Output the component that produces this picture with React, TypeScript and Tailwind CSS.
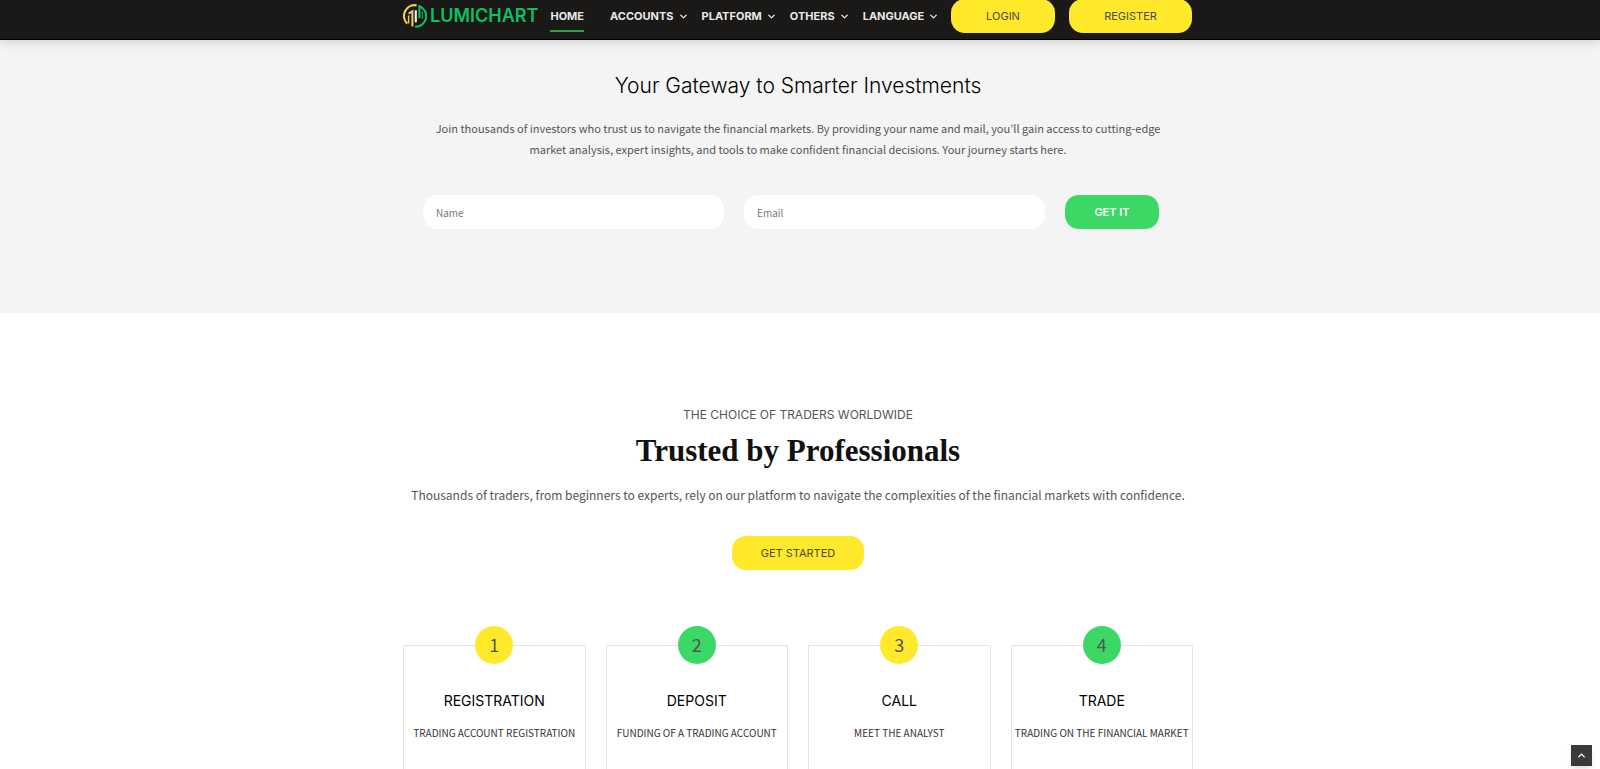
import { ChevronDown, ChevronUp } from 'lucide-react';

interface Step {
  title: string;
  text: string;
  color: string;
}

const menu = ['ACCOUNTS', 'PLATFORM', 'OTHERS', 'LANGUAGE'];

const steps: Step[] = [
  { title: 'REGISTRATION', text: 'TRADING ACCOUNT REGISTRATION', color: 'bg-[#ffe92a]' },
  { title: 'DEPOSIT', text: 'FUNDING OF A TRADING ACCOUNT', color: 'bg-[#3bd865]' },
  { title: 'CALL', text: 'MEET THE ANALYST', color: 'bg-[#ffe92a]' },
  { title: 'TRADE', text: 'TRADING ON THE FINANCIAL MARKET', color: 'bg-[#3bd865]' },
];

function LogoMark() {
  return (
    <svg viewBox="0 0 24 24" className="h-6 w-6" fill="none" aria-hidden="true">
      <path d="M13.6 1.3A10.8 10.8 0 0 0 4.2 19.6" stroke="#f3cf4e" strokeWidth="2.2" />
      <path d="M5.6 11.5V19.5" stroke="#f3cf4e" strokeWidth="1.4" />
      <path d="M5.6 9.6L9.4 7.2V22.6" stroke="#f3cf4e" strokeWidth="2" />
      <path d="M12.8 6.3V18.3" stroke="#f4f4f4" strokeWidth="2.1" />
      <path d="M16.4 14.2V2.2A10.6 10.6 0 0 1 12 22.7" stroke="#0fbf62" strokeWidth="2.1" />
      <path d="M19.3 7.5V14.5" stroke="#0fbf62" strokeWidth="1.1" />
    </svg>
  );
}

function Header() {
  return (
    <header className="sticky top-0 z-10 h-10 border-b border-black bg-[#1a1917] pr-1 shadow-[0_0_12px_rgba(0,0,0,0.2)]">
      <div className="mx-auto flex h-8 max-w-[790px] items-center pr-px">
        <a href="#home" className="flex items-center gap-[3px] text-[18px] leading-6 font-semibold text-[#0fbf62]">
          <LogoMark />
          LUMICHART
        </a>
        <nav className="ml-3 flex items-center text-[11px] leading-4 font-bold text-[#e9e9e9]">
          <a href="#home" className="mr-[26px] flex h-8 items-center border-b-2 border-[#2f9e44] pt-0.5">
            HOME
          </a>
          <div className="flex items-center gap-[13px]">
            {menu.map((item) => (
              <button key={item} type="button" className="flex items-center gap-1">
                {item}
                <ChevronDown size={11} strokeWidth={3} />
              </button>
            ))}
          </div>
        </nav>
        <div className="ml-auto flex gap-[14px] text-[11px] leading-4 text-[#4c4c3c]">
          <button type="button" className="h-[34px] w-[104px] rounded-[14px] bg-[#ffe92a]">
            LOGIN
          </button>
          <button type="button" className="h-[34px] w-[123px] rounded-[14px] bg-[#ffe92a]">
            REGISTER
          </button>
        </div>
      </div>
    </header>
  );
}

function SignUp() {
  return (
    <section className="bg-[#f4f4f4] pt-8 pr-1 pb-[84px]">
      <div className="mx-auto max-w-[750px] text-center">
        <h2 className="text-[21px] leading-7 font-light text-black">Your Gateway to Smarter Investments</h2>
        <p className="mt-[18px] px-3 font-['Noto_Sans_CJK_KR',sans-serif] text-[11px] leading-[21px] text-[#555]">
          Join thousands of investors who trust us to navigate the financial markets. By providing your name and mail,
          you’ll gain access to cutting-edge market analysis, expert insights, and tools to make confident financial
          decisions. Your journey starts here.
        </p>
        <form
          className="mt-[35px] flex gap-5 pr-[14px] font-['Noto_Sans_CJK_KR',sans-serif] text-[10px]"
          onSubmit={(e) => e.preventDefault()}
        >
          <input
            type="text"
            aria-label="Name"
            placeholder="Name"
            className="h-[34px] min-w-0 flex-1 rounded-[14px] bg-white px-[13px] placeholder:text-[#777]"
          />
          <input
            type="email"
            aria-label="Email"
            placeholder="Email"
            className="h-[34px] min-w-0 flex-1 rounded-[14px] bg-white px-[13px] placeholder:text-[#777]"
          />
          <button
            type="submit"
            className="h-[34px] w-[94px] rounded-[14px] bg-[#3bd865] font-['Inter',sans-serif] text-[11px] font-semibold text-white"
          >
            GET IT
          </button>
        </form>
      </div>
    </section>
  );
}

function StepCard({ step, number }: { step: Step; number: number }) {
  return (
    <li className="flex flex-col items-center border border-b-0 border-[#e4e4e4] text-center">
      <div
        className={`-mt-5 flex h-[38px] w-[38px] items-center justify-center rounded-full pb-0.5 font-['Noto_Sans_CJK_KR',sans-serif] text-[18px] leading-6 text-[#555] ${step.color}`}
      >
        {number}
      </div>
      <h3 className="mt-[25px] text-[14px] leading-6 text-black">{step.title}</h3>
      <p className="mt-3 font-['Noto_Sans_CJK_KR',sans-serif] text-[10px] leading-4 whitespace-nowrap text-[#333]">
        {step.text}
      </p>
    </li>
  );
}

function Trusted() {
  return (
    <section className="flex flex-1 flex-col pt-[92px] pr-1">
      <div className="mx-auto flex w-full max-w-[790px] flex-1 flex-col items-center text-center">
        <p className="text-[12px] leading-5 text-[#555]">THE CHOICE OF TRADERS WORLDWIDE</p>
        <h2 className="mt-2 font-['Liberation_Serif',serif] text-[31px] leading-9 font-bold text-[#111]">
          Trusted by Professionals
        </h2>
        <p className="mt-[14px] font-['Noto_Sans_CJK_KR',sans-serif] text-[12px] leading-6 text-[#555]">
          Thousands of traders, from beginners to experts, rely on our platform to navigate the complexities of the
          financial markets with confidence.
        </p>
        <button
          type="button"
          className="mt-[29px] h-[34px] w-[132px] rounded-[14px] bg-[#ffe92a] text-[11px] leading-4 text-[#4c4c1c]"
        >
          GET STARTED
        </button>
        <ol className="mt-[75px] grid w-full flex-1 grid-cols-4 gap-5">
          {steps.map((step, i) => (
            <StepCard key={step.title} step={step} number={i + 1} />
          ))}
        </ol>
      </div>
    </section>
  );
}

export default function App() {
  return (
    <div className="flex min-h-screen flex-col bg-white font-['Inter',sans-serif]">
      <Header />
      <SignUp />
      <Trusted />
      <button
        type="button"
        aria-label="Back to top"
        className="fixed right-2 bottom-[3px] flex h-[21px] w-[21px] items-center justify-center bg-[#3a3a3a] text-white shadow-md"
      >
        <ChevronUp size={11} strokeWidth={3} />
      </button>
    </div>
  );
}
